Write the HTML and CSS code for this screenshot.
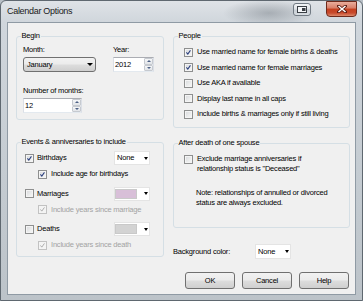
FILE: index.html
```html
<!DOCTYPE html>
<html>
<head>
<meta charset="utf-8">
<title>Calendar Options</title>
<link rel="stylesheet" href="styles.css">
</head>
<body>
<div class="window">
  <div class="titlebar">
    <span class="title">Calendar Options</span>
    <div class="caption-btns">
      <span class="cap-btn cap-help">
        <svg width="10" height="7" viewBox="0 0 10 7"><rect x="0.5" y="0.5" width="9" height="6" fill="#f4f6f8" stroke="#3a3f45"/><rect x="5" y="2" width="3.5" height="3" fill="#3a3f45"/></svg>
      </span>
      <span class="cap-btn cap-close">
        <svg width="10" height="8" viewBox="0 0 10 8"><path d="M1.5 1 L8.5 7 M8.5 1 L1.5 7" stroke="#5a1a10" stroke-width="3" stroke-linecap="square"/><path d="M1.5 1 L8.5 7 M8.5 1 L1.5 7" stroke="#ffffff" stroke-width="1.6"/></svg>
      </span>
    </div>
  </div>
  <div class="client">
    <div class="columns">
      <div class="col">
        <fieldset class="group">
          <legend>Begin</legend>
          <div class="begin-body">
            <div class="field">
              <span class="lbl">Month:</span>
              <div class="dropdown"><span>January</span><i class="arrow"></i></div>
            </div>
            <div class="field">
              <span class="lbl">Year:</span>
              <div class="spin"><span class="val">2012</span><span class="spin-btns"><b class="up"></b><b class="down"></b></span></div>
            </div>
            <div class="field">
              <span class="lbl">Number of months:</span>
              <div class="spin spin-months"><span class="val">12</span><span class="spin-btns"><b class="up"></b><b class="down"></b></span></div>
            </div>
          </div>
        </fieldset>

        <fieldset class="group events">
          <legend>Events &amp; anniversaries to include</legend>
          <div class="events-body">
            <div class="event">
              <div class="ev-main">
                <span class="cb"><svg viewBox="0 0 9 9"><path d="M1.8 4.4 L3.6 6.6 L7 1.8" fill="none" stroke="#283c7c" stroke-width="1.3"/></svg></span>
                <span>Birthdays</span>
                <span class="cpick"><span class="cp-text">None</span><i class="arrow small"></i></span>
              </div>
              <div class="ev-sub">
                <span class="cb"><svg viewBox="0 0 9 9"><path d="M1.8 4.4 L3.6 6.6 L7 1.8" fill="none" stroke="#283c7c" stroke-width="1.3"/></svg></span>
                <span>Include age for birthdays</span>
              </div>
            </div>
            <div class="event">
              <div class="ev-main">
                <span class="cb"></span>
                <span>Marriages</span>
                <span class="cpick"><span class="swatch thistle"></span><i class="arrow small"></i></span>
              </div>
              <div class="ev-sub disabled">
                <span class="cb"><svg viewBox="0 0 9 9"><path d="M1.8 4.4 L3.6 6.6 L7 1.8" fill="none" stroke="#a8a8a8" stroke-width="1.2"/></svg></span>
                <span>Include years since marriage</span>
              </div>
            </div>
            <div class="event">
              <div class="ev-main">
                <span class="cb"></span>
                <span>Deaths</span>
                <span class="cpick"><span class="swatch lightgray"></span><i class="arrow small"></i></span>
              </div>
              <div class="ev-sub disabled">
                <span class="cb"><svg viewBox="0 0 9 9"><path d="M1.8 4.4 L3.6 6.6 L7 1.8" fill="none" stroke="#a8a8a8" stroke-width="1.2"/></svg></span>
                <span>Include years since death</span>
              </div>
            </div>
          </div>
        </fieldset>
      </div>

      <div class="col">
        <fieldset class="group">
          <legend>People</legend>
          <div class="people-body">
            <div class="check-row">
              <span class="cb"><svg viewBox="0 0 9 9"><path d="M1.8 4.4 L3.6 6.6 L7 1.8" fill="none" stroke="#283c7c" stroke-width="1.3"/></svg></span>
              <span>Use married name for female births &amp; deaths</span>
            </div>
            <div class="check-row">
              <span class="cb"><svg viewBox="0 0 9 9"><path d="M1.8 4.4 L3.6 6.6 L7 1.8" fill="none" stroke="#283c7c" stroke-width="1.3"/></svg></span>
              <span>Use married name for female marriages</span>
            </div>
            <div class="check-row">
              <span class="cb"></span>
              <span>Use AKA if available</span>
            </div>
            <div class="check-row">
              <span class="cb"></span>
              <span>Display last name in all caps</span>
            </div>
            <div class="check-row">
              <span class="cb"></span>
              <span>Include births &amp; marriages only if still living</span>
            </div>
          </div>
        </fieldset>

        <fieldset class="group death">
          <legend>After death of one spouse</legend>
          <div class="death-body">
            <div class="death-row">
              <span class="cb"></span>
              <span class="death-text">Exclude marriage anniversaries if<br>relationship status is "Deceased"</span>
            </div>
            <p class="note">Note: relationships of annulled or divorced<br>status are always excluded.</p>
          </div>
        </fieldset>

        <div class="bg-row">
          <span class="bg-label">Background color:</span>
          <span class="cpick"><span class="cp-text">None</span><i class="arrow small"></i></span>
        </div>
      </div>
    </div>

    <div class="buttons">
      <span class="btn">OK</span>
      <span class="btn">Cancel</span>
      <span class="btn">Help</span>
    </div>
  </div>
</div>
</body>
</html>
```

FILE: styles.css
```css
* { box-sizing: border-box; }

html, body {
  margin: 0;
  padding: 0;
}

body {
  width: 363px;
  height: 301px;
  overflow: hidden;
  background: #b8bfc6;
  font-family: "Liberation Sans", Arial, sans-serif;
  font-size: 7.5px;
  letter-spacing: -0.2px;
  color: #000;
  white-space: nowrap;
}

.window {
  width: 363px;
  height: 301px;
  padding: 0 6px 5px 6px;
  border: 1px solid #5f6870;
  border-radius: 6px 6px 0 0;
  background:
    radial-gradient(ellipse 46px 14px at 268px 12px, rgba(110,118,126,0.45), rgba(110,118,126,0)),
    linear-gradient(180deg, #dfe3e7 0, #d0d6dc 21px, #c4cbd1 60%, #bcc3c9 100%);
}

/* Title bar */
.titlebar {
  height: 21px;
  display: flex;
  align-items: flex-start;
}

.title {
  margin-top: 5px;
  font-size: 9px;
  letter-spacing: -0.3px;
  line-height: 10px;
  color: #1a1a1a;
}

.caption-btns {
  margin-left: auto;
  margin-right: -1px;
  display: flex;
  align-items: flex-start;
  gap: 15px;
}

.cap-btn {
  display: flex;
  align-items: center;
  justify-content: center;
  border-radius: 3px;
}

.cap-help {
  margin-top: 2px;
  width: 18px;
  height: 13px;
  border: 1px solid #717a83;
  background: linear-gradient(180deg, #f2f4f6 0%, #dfe3e7 45%, #c9cfd5 55%, #d8dde2 100%);
}

.cap-close {
  width: 31px;
  height: 16px;
  border: 1px solid #6e2a1c;
  border-radius: 0 0 4px 4px;
  background: linear-gradient(180deg, #e9ad9c 0%, #d8806a 42%, #c4401f 52%, #c84a2c 78%, #dc8a6c 100%);
}

/* Client area */
.client {
  height: 273px;
  border: 1px solid #8f9aa4;
  background: #f0f0f0;
  padding: 8px 6px 0 8px;
}

.columns {
  display: grid;
  grid-template-columns: 148px 177px;
  column-gap: 9px;
  align-items: start;
}

.col {
  display: flex;
  flex-direction: column;
}

fieldset.group {
  margin: 0;
  padding: 0;
  min-width: 0;
  border: 1px solid #d5dfe5;
  border-radius: 3px;
}

fieldset.group legend {
  margin-left: 3.5px;
  padding: 0 1px;
  line-height: 10px;
}

fieldset.events {
  margin-top: 17px;
}

fieldset.death {
  margin-top: 10px;
}

/* Begin */
.begin-body {
  display: grid;
  grid-template-columns: 73px 41px;
  column-gap: 17px;
  row-gap: 14px;
  padding: 4px 7px 6px 6px;
}

.lbl {
  display: block;
  line-height: 10px;
  margin-bottom: 2px;
}

.dropdown {
  height: 15px;
  border: 1px solid #707070;
  border-radius: 3px;
  background: linear-gradient(180deg, #f2f2f2 0%, #ebebeb 48%, #dddddd 52%, #cfcfcf 100%);
  display: flex;
  align-items: center;
  padding-left: 3px;
  padding-right: 2px;
}

.arrow {
  margin-left: auto;
  width: 0;
  height: 0;
  border-top: 3px solid #000;
  border-left: 3px solid transparent;
  border-right: 3px solid transparent;
}

.arrow.small {
  border-top-width: 3px;
  border-left-width: 2.5px;
  border-right-width: 2.5px;
}

.spin {
  height: 15px;
  border: 1px solid #abadb3;
  border-left-color: #dbdfe6;
  border-right-color: #dbdfe6;
  border-bottom-color: #e3e9ef;
  background: #fff;
  display: flex;
  align-items: center;
  padding-left: 1px;
}

.spin-months {
  width: 59px;
}

.spin-btns {
  margin-left: auto;
  width: 10px;
  height: 13px;
  display: flex;
  flex-direction: column;
  padding: 0 0 0 1px;
}

.spin-btns b {
  flex: 1;
  border: 1px solid #c6cad0;
  border-radius: 1px;
  background: linear-gradient(180deg, #f6f7f8, #e1e4e8);
  display: flex;
  align-items: center;
  justify-content: center;
}

.spin-btns b::after {
  content: "";
  width: 0;
  height: 0;
  border-left: 2px solid transparent;
  border-right: 2px solid transparent;
}

.spin-btns .up::after {
  border-bottom: 2px solid #4d6185;
}

.spin-btns .down::after {
  border-top: 2px solid #4d6185;
}

/* Checkboxes */
.cb {
  flex: none;
  width: 9px;
  height: 9px;
  border: 1px solid #8e8f8f;
  background: linear-gradient(135deg, #d6d8db 0%, #eceded 60%, #f8f8f8 100%);
  box-shadow: inset 0 0 0 1px #f4f4f4;
  display: flex;
}

.cb svg {
  width: 7px;
  height: 7px;
}

.disabled {
  color: #a3a3a3;
}

.disabled .cb {
  border-color: #c2c2c2;
  background: #f4f4f4;
}

/* Events */
.events-body {
  display: flex;
  flex-direction: column;
  gap: 7px;
  padding: 3.5px 13px 6px 8px;
}

.ev-main {
  height: 15px;
  display: flex;
  align-items: center;
  gap: 3px;
  line-height: 10px;
}

.ev-sub {
  margin-top: 3.5px;
  margin-left: 13px;
  height: 10px;
  display: flex;
  align-items: center;
  gap: 4px;
  line-height: 10px;
}

.cpick {
  margin-left: auto;
  width: 36px;
  height: 14px;
  border: 1px solid #e4e4e4;
  background: #fff;
  display: flex;
  align-items: center;
  padding-right: 1.5px;
}

.cp-text {
  padding-left: 2px;
  line-height: 10px;
}

.swatch {
  width: 22px;
  height: 10px;
  border: 1px solid #c9c9c9;
}

.swatch.thistle {
  background: #d8bfd8;
}

.swatch.lightgray {
  background: #d3d3d3;
}

/* People */
.people-body {
  display: flex;
  flex-direction: column;
  gap: 5.5px;
  padding: 6px 8px 8px 10px;
}

.check-row {
  height: 10px;
  display: flex;
  align-items: center;
  gap: 4px;
  line-height: 10px;
}

/* After death */
.death-body {
  padding: 6px 8px 19px 10px;
}

.death-row {
  display: flex;
  align-items: flex-start;
  gap: 4px;
}

.death-row .cb {
  margin-top: 0.5px;
}

.death-text {
  line-height: 10px;
}

.note {
  margin: 14px 0 0 12px;
  line-height: 10px;
}

/* Background color */
.bg-row {
  margin-top: 16px;
  height: 15px;
  display: flex;
  align-items: center;
}

.bg-label {
  width: 82px;
  line-height: 10px;
}

.bg-row .cpick {
  margin-left: 0;
  height: 15px;
}

/* Buttons */
.buttons {
  margin-top: 13px;
  display: flex;
  justify-content: flex-end;
  gap: 7px;
}

.btn {
  width: 50px;
  height: 17px;
  border: 1px solid #707070;
  border-radius: 3px;
  background: linear-gradient(180deg, #f2f2f2 0%, #ebebeb 48%, #dddddd 52%, #cfcfcf 100%);
  display: flex;
  align-items: center;
  justify-content: center;
  line-height: 10px;
}
```
